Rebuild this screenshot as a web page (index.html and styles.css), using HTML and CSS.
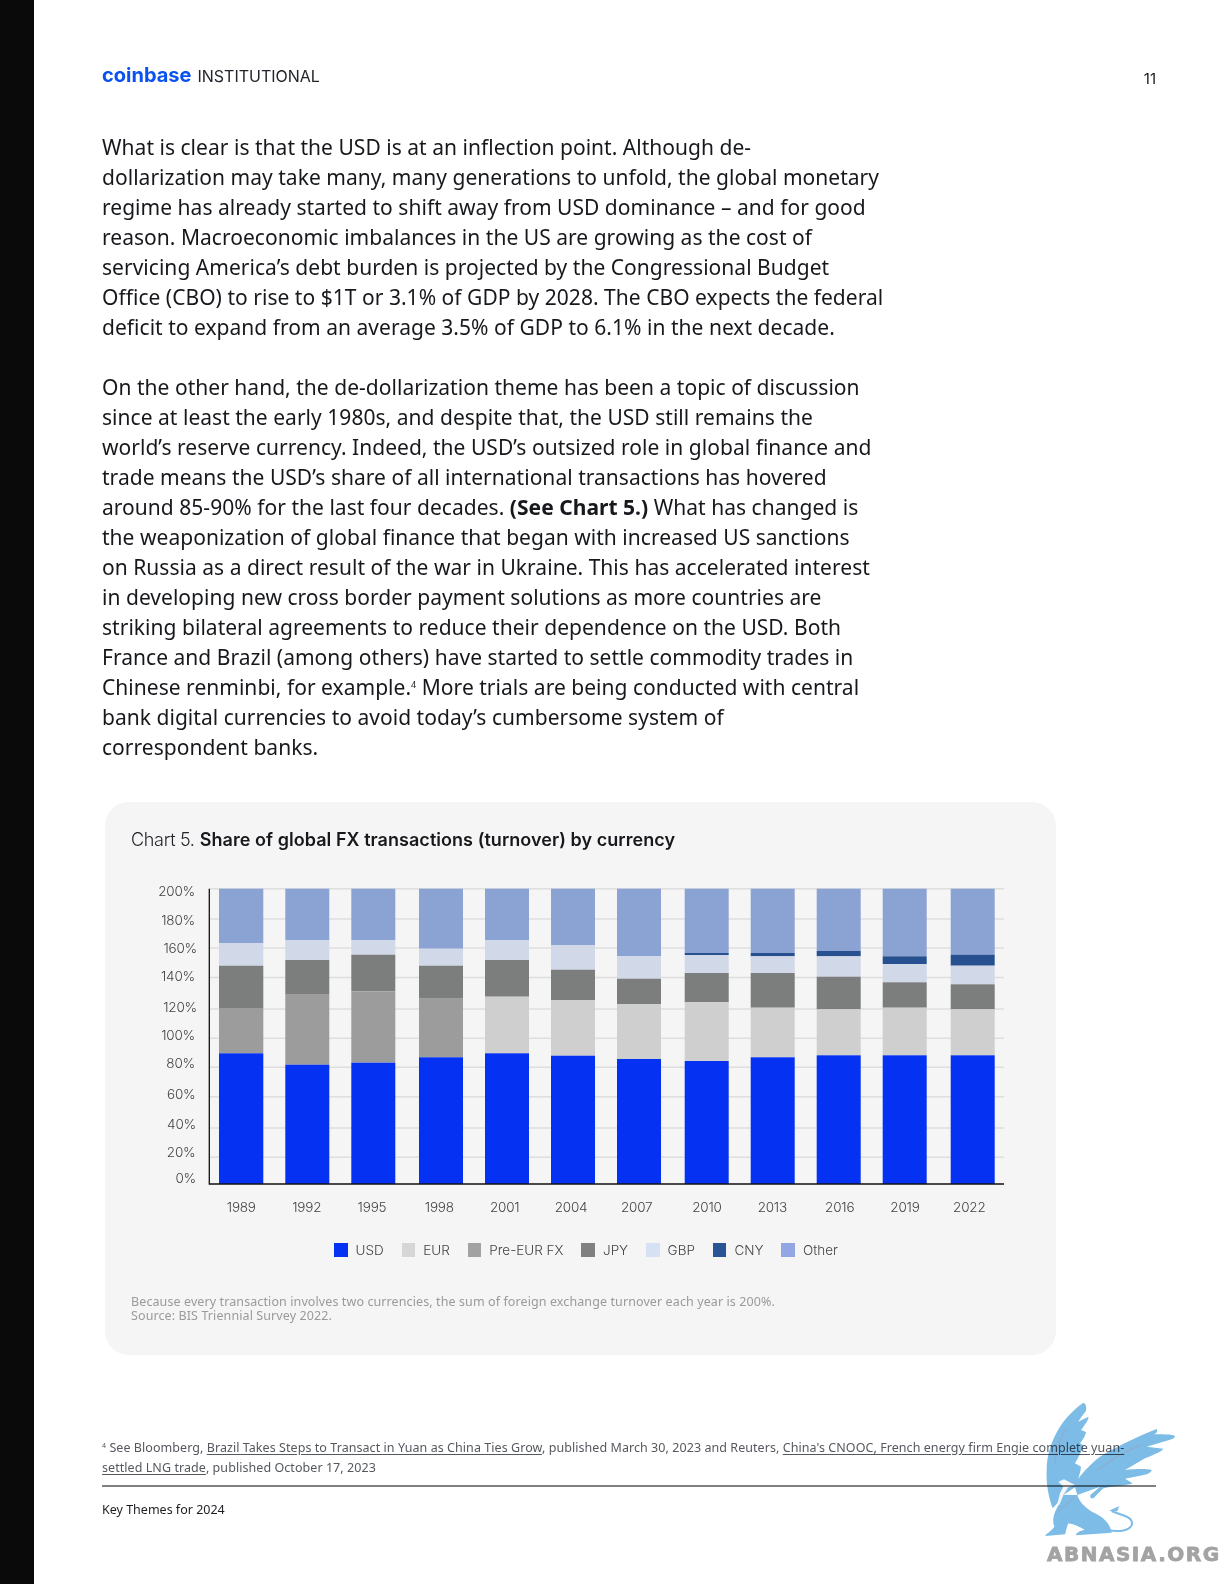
FILE: index.html
```html
<!DOCTYPE html>
<html lang="en">
<head>
<meta charset="utf-8">
<title>Key Themes for 2024</title>
<link rel="stylesheet" href="styles.css">
</head>
<body>
<aside class="edge"></aside>
<main class="page">
  <header class="top">
    <div class="brand"><span class="brand-logo">coinbase</span><span class="brand-sub">INSTITUTIONAL</span></div>
    <div class="page-no">11</div>
  </header>
  <article class="copy">
    <p>What is clear is that the USD is at an inflection point. Although de-<br>dollarization may take many, many generations to unfold, the global monetary<br>regime has already started to shift away from USD dominance – and for good<br>reason. Macroeconomic imbalances in the US are growing as the cost of<br>servicing America’s debt burden is projected by the Congressional Budget<br>Office (CBO) to rise to $1T or 3.1% of GDP by 2028. The CBO expects the federal<br>deficit to expand from an average 3.5% of GDP to 6.1% in the next decade.</p>
    <p>On the other hand, the de-dollarization theme has been a topic of discussion<br>since at least the early 1980s, and despite that, the USD still remains the<br>world’s reserve currency. Indeed, the USD’s outsized role in global finance and<br>trade means the USD’s share of all international transactions has hovered<br>around 85-90% for the last four decades. <strong>(See Chart 5.)</strong> What has changed is<br>the weaponization of global finance that began with increased US sanctions<br>on Russia as a direct result of the war in Ukraine. This has accelerated interest<br>in developing new cross border payment solutions as more countries are<br>striking bilateral agreements to reduce their dependence on the USD. Both<br>France and Brazil (among others) have started to settle commodity trades in<br>Chinese renminbi, for example.<sup class="ref">4</sup> More trials are being conducted with central<br>bank digital currencies to avoid today’s cumbersome system of<br>correspondent banks.</p>
  </article>
  <section class="card">
    <h2 class="card-title"><span class="card-kicker">Chart 5.</span> <strong>Share of global FX transactions (turnover) by currency</strong></h2>
    <svg class="plot" width="900" height="340" viewBox="131 872 900 340" role="img" aria-label="Stacked bar chart of FX turnover by currency">
      <g class="grid">
        <line x1="209" x2="1004" y1="888.7" y2="888.7"/><line x1="209" x2="1004" y1="919" y2="919"/><line x1="209" x2="1004" y1="948" y2="948"/><line x1="209" x2="1004" y1="977.5" y2="977.5"/><line x1="209" x2="1004" y1="1009" y2="1009"/><line x1="209" x2="1004" y1="1038.3" y2="1038.3"/><line x1="209" x2="1004" y1="1067.3" y2="1067.3"/><line x1="209" x2="1004" y1="1096.7" y2="1096.7"/><line x1="209" x2="1004" y1="1128" y2="1128"/><line x1="209" x2="1004" y1="1157.3" y2="1157.3"/>
      </g>
      <g class="bar">
        <rect class="s-other" x="219" y="888.7" width="44.3" height="54.6"/><rect class="s-gbp" x="219" y="943.3" width="44.3" height="22.4"/><rect class="s-jpy" x="219" y="965.7" width="44.3" height="42.3"/><rect class="s-pre" x="219" y="1008" width="44.3" height="45.3"/><rect class="s-usd" x="219" y="1053.3" width="44.3" height="130.7"/>
        <rect class="s-other" x="285.3" y="888.7" width="44" height="51.3"/><rect class="s-gbp" x="285.3" y="940" width="44" height="20"/><rect class="s-jpy" x="285.3" y="960" width="44" height="34.7"/><rect class="s-pre" x="285.3" y="994.7" width="44" height="70"/><rect class="s-usd" x="285.3" y="1064.7" width="44" height="119.3"/>
        <rect class="s-other" x="351.3" y="888.7" width="44" height="51.3"/><rect class="s-gbp" x="351.3" y="940" width="44" height="14.7"/><rect class="s-jpy" x="351.3" y="954.7" width="44" height="36.6"/><rect class="s-pre" x="351.3" y="991.3" width="44" height="71.4"/><rect class="s-usd" x="351.3" y="1062.7" width="44" height="121.3"/>
        <rect class="s-other" x="419" y="888.7" width="44" height="60"/><rect class="s-gbp" x="419" y="948.7" width="44" height="17"/><rect class="s-jpy" x="419" y="965.7" width="44" height="33"/><rect class="s-pre" x="419" y="998.7" width="44" height="58.6"/><rect class="s-usd" x="419" y="1057.3" width="44" height="126.7"/>
        <rect class="s-other" x="485" y="888.7" width="44" height="51.3"/><rect class="s-gbp" x="485" y="940" width="44" height="20"/><rect class="s-jpy" x="485" y="960" width="44" height="36.7"/><rect class="s-eur" x="485" y="996.7" width="44" height="56.6"/><rect class="s-usd" x="485" y="1053.3" width="44" height="130.7"/>
        <rect class="s-other" x="551" y="888.7" width="44" height="56.6"/><rect class="s-gbp" x="551" y="945.3" width="44" height="24.4"/><rect class="s-jpy" x="551" y="969.7" width="44" height="30.6"/><rect class="s-eur" x="551" y="1000.3" width="44" height="55.4"/><rect class="s-usd" x="551" y="1055.7" width="44" height="128.3"/>
        <rect class="s-other" x="617" y="888.7" width="44" height="67.6"/><rect class="s-gbp" x="617" y="956.3" width="44" height="22.4"/><rect class="s-jpy" x="617" y="978.7" width="44" height="25.3"/><rect class="s-eur" x="617" y="1004" width="44" height="55"/><rect class="s-usd" x="617" y="1059" width="44" height="125"/>
        <rect class="s-other" x="684.7" y="888.7" width="44" height="64.3"/><rect class="s-cny" x="684.7" y="953" width="44" height="2"/><rect class="s-gbp" x="684.7" y="955" width="44" height="18"/><rect class="s-jpy" x="684.7" y="973" width="44" height="29.3"/><rect class="s-eur" x="684.7" y="1002.3" width="44" height="58.7"/><rect class="s-usd" x="684.7" y="1061" width="44" height="123"/>
        <rect class="s-other" x="750.7" y="888.7" width="44" height="64.3"/><rect class="s-cny" x="750.7" y="953" width="44" height="3.3"/><rect class="s-gbp" x="750.7" y="956.3" width="44" height="16.7"/><rect class="s-jpy" x="750.7" y="973" width="44" height="34.7"/><rect class="s-eur" x="750.7" y="1007.7" width="44" height="49.6"/><rect class="s-usd" x="750.7" y="1057.3" width="44" height="126.7"/>
        <rect class="s-other" x="816.7" y="888.7" width="44" height="62.3"/><rect class="s-cny" x="816.7" y="951" width="44" height="5.3"/><rect class="s-gbp" x="816.7" y="956.3" width="44" height="20.4"/><rect class="s-jpy" x="816.7" y="976.7" width="44" height="32.6"/><rect class="s-eur" x="816.7" y="1009.3" width="44" height="46"/><rect class="s-usd" x="816.7" y="1055.3" width="44" height="128.7"/>
        <rect class="s-other" x="882.7" y="888.7" width="44" height="67.6"/><rect class="s-cny" x="882.7" y="956.3" width="44" height="7.7"/><rect class="s-gbp" x="882.7" y="964" width="44" height="18.3"/><rect class="s-jpy" x="882.7" y="982.3" width="44" height="25.4"/><rect class="s-eur" x="882.7" y="1007.7" width="44" height="47.6"/><rect class="s-usd" x="882.7" y="1055.3" width="44" height="128.7"/>
        <rect class="s-other" x="950.7" y="888.7" width="44" height="66"/><rect class="s-cny" x="950.7" y="954.7" width="44" height="11"/><rect class="s-gbp" x="950.7" y="965.7" width="44" height="18.6"/><rect class="s-jpy" x="950.7" y="984.3" width="44" height="25"/><rect class="s-eur" x="950.7" y="1009.3" width="44" height="46"/><rect class="s-usd" x="950.7" y="1055.3" width="44" height="128.7"/>
      </g>
      <path class="axis" d="M209.3 888.7V1184H1004"/>
      <g class="y-labels">
        <text x="195" y="896">200%</text><text x="195" y="924.5">180%</text><text x="197" y="952.5">160%</text><text x="195" y="981">140%</text><text x="197" y="1011.5">120%</text><text x="195" y="1039.5">100%</text><text x="195" y="1068">80%</text><text x="195.5" y="1098.5">60%</text><text x="196" y="1129">40%</text><text x="195.5" y="1157">20%</text><text x="196" y="1183">0%</text>
      </g>
      <g class="x-labels">
        <text x="241.3" y="1211.5">1989</text><text x="306.7" y="1211.5">1992</text><text x="372" y="1211.5">1995</text><text x="439.3" y="1211.5">1998</text><text x="504.7" y="1211.5">2001</text><text x="571" y="1211.5">2004</text><text x="636.7" y="1211.5">2007</text><text x="707" y="1211.5">2010</text><text x="772.3" y="1211.5">2013</text><text x="839.7" y="1211.5">2016</text><text x="905" y="1211.5">2019</text><text x="969.3" y="1211.5">2022</text>
      </g>
    </svg>
    <ul class="legend">
      <li><i class="sw sw-usd"></i>USD</li>
      <li><i class="sw sw-eur"></i>EUR</li>
      <li><i class="sw sw-pre"></i>Pre-EUR FX</li>
      <li><i class="sw sw-jpy"></i>JPY</li>
      <li><i class="sw sw-gbp"></i>GBP</li>
      <li><i class="sw sw-cny"></i>CNY</li>
      <li><i class="sw sw-other"></i>Other</li>
    </ul>
    <p class="note">Because every transaction involves two currencies, the sum of foreign exchange turnover each year is 200%.<br>Source: BIS Triennial Survey 2022.</p>
  </section>
  <footer class="foot">
    <p class="footnote"><sup class="fn-mark">4</sup> See Bloomberg, <a href="#">Brazil Takes Steps to Transact in Yuan as China Ties Grow</a>, published March 30, 2023 and Reuters, <a href="#">China's CNOOC, French energy firm Engie complete yuan-<br>settled LNG trade</a>, published October 17, 2023</p>
    <div class="foot-title">Key Themes for 2024</div>
  </footer>
</main>
<div class="watermark">
  <svg class="griffin" width="224" height="162" viewBox="0 0 672 486" aria-hidden="true">
    <path class="g-body" d="M250 68C258 70 262 85 256 95C250 103 240 115 235 125L265 110C268 118 250 140 243 150L258 156C258 165 245 185 240 190L250 196C248 210 232 238 225 250L243 260C242 275 238 285 234 297C250 275 280 245 300 230C340 205 400 175 470 147C475 155 468 160 462 163C485 163 510 163 525 167C525 175 515 178 500 182L440 200L490 206C485 214 470 220 435 235L375 270C400 268 435 265 455 270C455 278 440 284 420 287L375 296L398 310C380 318 340 318 310 325L280 355C272 356 268 350 272 344L300 320L232 345L225 322L190 345L172 370L158 385C145 350 138 310 140 270C140 225 155 180 180 140C200 110 225 85 250 68Z"/>
    <path class="g-body" d="M190 345L232 345C238 365 255 385 285 400C310 412 330 430 335 458L228 466C228 458 240 452 254 450C240 440 220 432 205 430C200 440 198 455 195 463L137 468C135 462 150 458 163 440C157 425 160 410 165 396Z"/>
    <path class="g-tail" d="M322 450C360 458 396 450 396 430C396 410 370 408 335 393"/>
    <path class="g-body" d="M326 392L358 379L352 394Z"/>
    <path class="g-head" d="M175 305L192 298L225 315L205 322L190 345L178 375L172 372L180 340L190 320Z"/>
    <path class="g-scar" d="M165 250C170 210 180 170 200 145M295 270C330 240 380 210 425 195M165 403C185 385 205 365 225 350"/>
  </svg>
  <div class="wm-text">ABNASIA.ORG</div>
</div>
</body>
</html>
```

FILE: styles.css
```css
* { box-sizing: border-box; }
html, body { margin: 0; padding: 0; }
body {
  width: 1224px;
  height: 1584px;
  overflow: hidden;
  display: flex;
  position: relative;
  background: #fff;
  color: #16181c;
  font-family: Inter, "Liberation Sans", sans-serif;
}
.edge { width: 34px; background: #0a0a0b; flex: none; }
.page { flex: 1; padding: 60px 68px 0 68px; min-width: 0; }

.top { display: flex; justify-content: space-between; align-items: flex-start; height: 71.5px; }
.brand { display: flex; align-items: baseline; gap: 6px; line-height: 30px; }
.brand-logo { color: #0a52f0; font-size: 20px; font-weight: 700; }
.brand-sub { font-size: 16px; color: #22252b; font-weight: 400; }
.page-no { font-size: 15px; line-height: 18px; margin-top: 10px; }

.copy { font-family: "Noto Sans", sans-serif; font-size: 21px; line-height: 30px; color: #16181c; width: 800px; letter-spacing: 0.03px; }
.copy p { margin: 0 0 30px; white-space: nowrap; }
.copy p:last-child { margin-bottom: 0; }
.copy strong { font-weight: 700; }
.ref { font-size: 9px; line-height: 0; vertical-align: 7px; }

.card {
  width: 951px;
  height: 553px;
  margin: 40.5px 0 0 3px;
  padding: 26px 26px 0;
  background: #f5f5f5;
  border-radius: 24px;
}
.card-title { margin: 0; font-size: 18px; line-height: 24px; font-weight: 400; color: #22242a; }
.card-kicker { letter-spacing: -0.3px; font-weight: 300; }
.card-title strong { font-weight: 600; color: #16181c; letter-spacing: 0.05px; }
.plot { display: block; margin-top: 20px; overflow: visible; }
.grid line { stroke: #dedede; stroke-width: 1.4; }
.axis { fill: none; stroke: #111; stroke-width: 1.3; }
.s-usd { fill: #0431f2; }
.s-eur { fill: #cfcfcf; }
.s-pre { fill: #9c9c9c; }
.s-jpy { fill: #7c7d7d; }
.s-gbp { fill: #d1d8e8; }
.s-cny { fill: #26508f; }
.s-other { fill: #8aa3d3; }
.y-labels text { text-anchor: end; }
.x-labels text { text-anchor: middle; }
.y-labels text, .x-labels text { font-family: Inter, sans-serif; font-size: 13.5px; font-weight: 300; fill: #444; letter-spacing: -0.2px; }

.legend {
  list-style: none;
  display: flex;
  gap: 18px;
  margin: 30px 0 0 203px;
  padding: 0;
  font-size: 13.5px;
  font-weight: 300;
  line-height: 16px;
  color: #444;
}
.legend li { display: flex; align-items: center; gap: 8px; }
.sw { width: 13.5px; height: 13.5px; display: block; }
.sw-usd { background: #0431f2; }
.sw-eur { background: #d6d6d6; }
.sw-pre { background: #a2a2a2; }
.sw-jpy { background: #808080; }
.sw-gbp { background: #d7e1f4; }
.sw-cny { background: #2a5594; }
.sw-other { background: #91a6e2; }
.note { margin: 37px 0 0; font-family: "Noto Sans", sans-serif; font-size: 12.5px; line-height: 14px; color: #9a9a9a; letter-spacing: 0.1px; }

.foot { margin-top: 83px; font-family: "Noto Sans", sans-serif; }
.footnote {
  margin: 0;
  height: 47px;
  font-size: 12.5px;
  line-height: 20px;
  letter-spacing: 0.06px;
  color: #55585e;
  border-bottom: 2px solid #808080;
  white-space: nowrap;
  box-sizing: content-box;
}
.footnote a { color: inherit; text-decoration: underline; text-underline-offset: 2px; }
.fn-mark { font-size: 7px; line-height: 0; vertical-align: 4px; }
.foot-title { margin-top: 14px; font-size: 12.5px; line-height: 18px; color: #1c1e22; }

.watermark { position: absolute; left: 1000px; top: 1380px; width: 224px; }
.griffin { display: block; mix-blend-mode: multiply; }
.g-body { fill: #7cbce6; }
.g-head { fill: #f4f8fb; }
.g-tail { fill: none; stroke: #7cbce6; stroke-width: 6; }
.g-scar { fill: none; stroke: #a89aa8; stroke-width: 3; opacity: .6; }
.wm-text {
  margin: 0 0 0 47px;
  font-family: "DejaVu Sans", sans-serif;
  font-weight: 700;
  font-size: 20px;
  line-height: 24px;
  letter-spacing: 1.5px;
  color: #a3a3a3;
  -webkit-text-stroke: 0.8px #a3a3a3;
  white-space: nowrap;
}
```
